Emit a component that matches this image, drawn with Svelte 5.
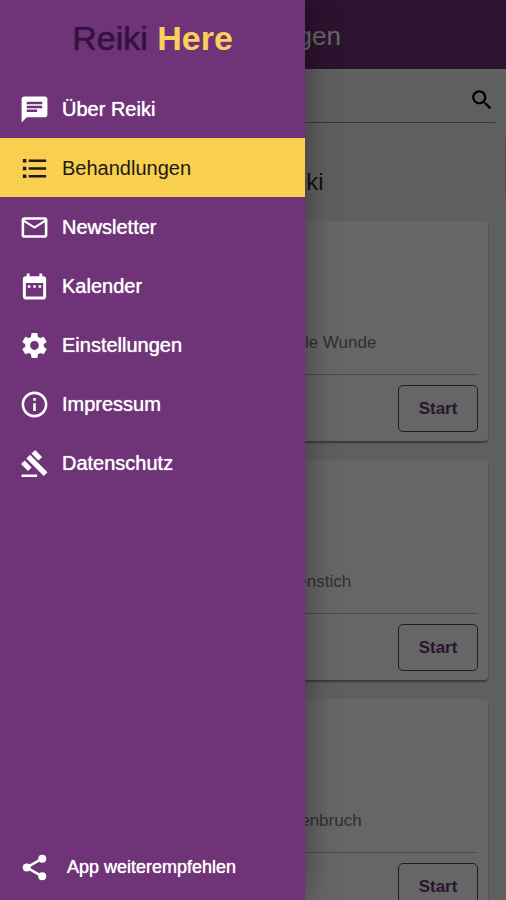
<script>
	let active = 'Behandlungen';
	let search = '';

	const menu = [
		{
			title: 'Über Reiki',
			icon: 'M20 2H4c-1.100 0-1.990.900-1.990 2L2 22l4-4h14c1.100 0 2-.900 2-2V4c0-1.100-.900-2-2-2zM6 9h12v2H6V9zm8 5H6v-2h8v2zm4-6H6V6h12v2z'
		},
		{
			title: 'Behandlungen',
			icon: 'M3 4.600h2.700v2.700H3zM3 10.600h2.700v2.700H3zM3 16.600h2.700v2.700H3zM7.500 5H21v2H7.500zM7.500 11H21v2H7.500zM7.500 17H21v2H7.500z'
		},
		{
			title: 'Newsletter',
			icon: 'M20 4H4c-1.100 0-1.990.900-1.990 2L2 18c0 1.100.900 2 2 2h16c1.100 0 2-.900 2-2V6c0-1.100-.900-2-2-2zm0 14H4V8l8 5 8-5v10zm-8-7L4 6h16l-8 5z'
		},
		{
			title: 'Kalender',
			icon: 'M8.800 11H6.800v2h2v-2zm4.200 0h-2v2h2v-2zm4.200 0h-2v2h2v-2zM19 4h-1V2h-2.200v2H8.200V2H6v2H5c-1.110 0-1.990.900-1.990 2L3 20c0 1.100.890 2 2 2h14c1.100 0 2-.900 2-2V6c0-1.100-.900-2-2-2zm-.300 15.700H5.300V9.200h13.400v10.500z'
		},
		{
			title: 'Einstellungen',
			icon: 'M19.140 12.940c.040-.300.060-.610.060-.940 0-.320-.020-.640-.070-.940l2.030-1.580c.180-.140.230-.410.120-.610l-1.920-3.320c-.120-.220-.370-.290-.590-.220l-2.390.960c-.500-.380-1.030-.700-1.620-.940l-.360-2.540c-.040-.240-.240-.410-.480-.410h-3.840c-.240 0-.430.170-.470.410l-.360 2.540c-.590.240-1.130.570-1.620.940l-2.390-.960c-.220-.080-.470 0-.590.220L2.740 8.870c-.120.210-.080.470.120.610l2.030 1.580c-.050.300-.090.630-.090.940s.020.640.070.940l-2.030 1.580c-.180.140-.230.410-.120.610l1.920 3.320c.120.220.370.290.590.220l2.390-.960c.500.380 1.030.700 1.620.940l.360 2.540c.050.240.240.410.480.410h3.840c.240 0 .440-.170.470-.410l.360-2.540c.590-.240 1.130-.560 1.620-.940l2.390.960c.220.080.470 0 .590-.220l1.920-3.320c.120-.220.070-.470-.120-.610l-2.010-1.580zM12 15.400c-1.880 0-3.400-1.520-3.400-3.400s1.520-3.400 3.400-3.400 3.400 1.520 3.400 3.400-1.520 3.400-3.400 3.400z'
		},
		{
			title: 'Impressum',
			icon: 'M11 7h2v2h-2zm0 4h2v6h-2zm1-9C6.480 2 2 6.480 2 12s4.480 10 10 10 10-4.480 10-10S17.520 2 12 2zm0 18c-4.410 0-8-3.590-8-8s3.590-8 8-8 8 3.590 8 8-3.590 8-8 8z'
		},
		{
			title: 'Datenschutz',
			icon: 'M2 20.500h12v2H2zM5.700 8.100l2.830-2.827 13.500 13.500-2.828 2.828zM12.500 1.500l5.400 5.400-2.830 2.830-5.400-5.400zM4.400 9.600l5.400 5.400-2.828 2.828-5.400-5.400z'
		}
	];

	const treatments = ['Schmale Wunde', 'Insektenstich', 'Knochenbruch'];
</script>

<div class="app">
	<div class="page">
		<header>
			<h1>Behandlungen</h1>
		</header>
		<main>
			<label class="search">
				<input type="text" aria-label="Suche" bind:value={search} />
				<svg viewBox="0 0 24 24" aria-hidden="true">
					<path
						d="M15.500 14h-.790l-.280-.270C15.410 12.590 16 11.110 16 9.500 16 5.910 13.090 3 9.500 3S3 5.910 3 9.500 5.910 16 9.500 16c1.610 0 3.090-.590 4.230-1.570l.270.280v.790l5 4.990L20.490 19l-4.990-5zm-6 0C7.010 14 5 11.990 5 9.500S7.010 5 9.500 5 14 7.010 14 9.500 11.990 14 9.500 14z"
					/>
				</svg>
			</label>
			<h2>Notfälle Reiki</h2>
			<div class="cards">
				{#each treatments as treatment}
					<article class="card">
						<div class="card-body">
							<p>{treatment}</p>
						</div>
						<div class="card-actions">
							<button type="button">Start</button>
						</div>
					</article>
				{/each}
			</div>
		</main>
		<span class="next-page" aria-hidden="true"></span>
	</div>

	<div class="backdrop"></div>

	<aside>
		<div class="brand">Reiki <strong>Here</strong></div>
		<nav>
			{#each menu as item}
				<a
					href="#{item.title}"
					class="menu-item"
					class:active={active === item.title}
					on:click|preventDefault={() => (active = item.title)}
				>
					<svg viewBox="0 0 24 24" aria-hidden="true"><path d={item.icon} /></svg>
					<span>{item.title}</span>
				</a>
			{/each}
		</nav>
		<button type="button" class="share">
			<svg viewBox="0 0 24 24" aria-hidden="true">
				<path class="share-lines" d="M18 5.200L6 12l12 6.800" />
				<circle cx="18" cy="5.200" r="3.100" />
				<circle cx="6" cy="12" r="3.100" />
				<circle cx="18" cy="18.800" r="3.100" />
			</svg>
			<span>App weiterempfehlen</span>
		</button>
	</aside>
</div>

<style>
	.app {
		position: relative;
		height: 100vh;
		overflow: hidden;
		font-family: 'Liberation Sans', Arial, Helvetica, sans-serif;
	}
	.page {
		position: relative;
		min-height: 100%;
		background-color: #eee;
	}
	header {
		display: flex;
		align-items: center;
		justify-content: center;
		height: 69px;
		padding-top: 3px;
		padding-left: 8px;
		box-sizing: border-box;
		background-color: #6f3077;
		color: #fff;
	}
	h1,
	h2,
	p {
		margin: 0;
		font-weight: normal;
	}
	h1 {
		font-size: 26px;
		line-height: 32px;
	}
	h2 {
		padding: 43px 0 24px;
		font-size: 24px;
		line-height: 31px;
		text-align: center;
		color: #333;
	}
	.search {
		display: flex;
		align-items: center;
		height: 53px;
		margin: 0 11px;
		border-bottom: 1px solid #8c8c8c;
	}
	.search input {
		flex: 1;
		min-width: 0;
		height: 40px;
		padding: 0 10px;
		border: none;
		outline: none;
		background: transparent;
		font: inherit;
		font-size: 20px;
	}
	.search svg {
		width: 26px;
		height: 26px;
		margin-top: 8px;
	}
	.cards {
		display: flex;
		flex-direction: column;
		gap: 19px;
		padding: 0 18px 19px 16px;
	}
	.card {
		padding: 0 10px;
		border-radius: 4px;
		background-color: #fff;
		box-shadow: 0 2px 2px rgba(0, 0, 0, 0.4);
	}
	.card-body {
		display: grid;
		grid-template-columns: 1fr 1fr;
		align-items: end;
		height: 154px;
		padding-bottom: 19px;
		box-sizing: border-box;
		border-bottom: 1px solid #bbb;
	}
	.card-body p {
		grid-column: 2;
		font-size: 17px;
		line-height: 24px;
		color: #777;
	}
	.card-actions {
		display: flex;
		justify-content: flex-end;
		padding: 10px 0 9px;
	}
	.card-actions button {
		width: 80px;
		height: 47px;
		border: 1px solid #6f3477;
		border-radius: 5px;
		background: none;
		font-family: inherit;
		font-size: 17px;
		font-weight: bold;
		color: #6f3477;
	}
	.next-page {
		position: absolute;
		top: 138px;
		right: 0;
		width: 1px;
		height: 59px;
		background-color: #f8cf4f;
	}
	.backdrop {
		position: absolute;
		inset: 0;
		background-color: rgba(0, 0, 0, 0.6);
	}
	aside {
		position: absolute;
		top: 0;
		bottom: 0;
		left: 0;
		display: flex;
		flex-direction: column;
		width: 305px;
		max-width: 85vw;
		background-color: #6f3477;
		color: #fff;
		box-shadow: 0 0 32px rgba(0, 0, 0, 0.4);
	}
	.brand {
		height: 79px;
		font-size: 34px;
		line-height: 77px;
		text-align: center;
		color: #33123f;
		text-shadow: 0 0 1px #33123f;
	}
	.brand strong {
		color: #fbcf5c;
		text-shadow: none;
	}
	nav {
		flex: 1;
	}
	.menu-item,
	.share {
		display: flex;
		align-items: center;
		height: 59px;
		padding: 2px 19px 0;
		box-sizing: border-box;
		color: #fff;
		text-decoration: none;
		font-size: 20px;
		text-shadow: 0 0 1px #fff;
	}
	.menu-item svg,
	.share svg {
		width: 31px;
		height: 31px;
		margin-right: 12px;
		fill: currentColor;
	}
	.menu-item.active {
		background-color: #f8cf4f;
		color: #1f1a17;
		text-shadow: none;
	}
	.share {
		margin-bottom: 4px;
		border: none;
		background: none;
		font-family: inherit;
		font-size: 18px;
		cursor: pointer;
	}
	.share svg {
		margin-right: 17px;
	}
	.share-lines {
		fill: none;
		stroke: currentColor;
		stroke-width: 2px;
	}
</style>
